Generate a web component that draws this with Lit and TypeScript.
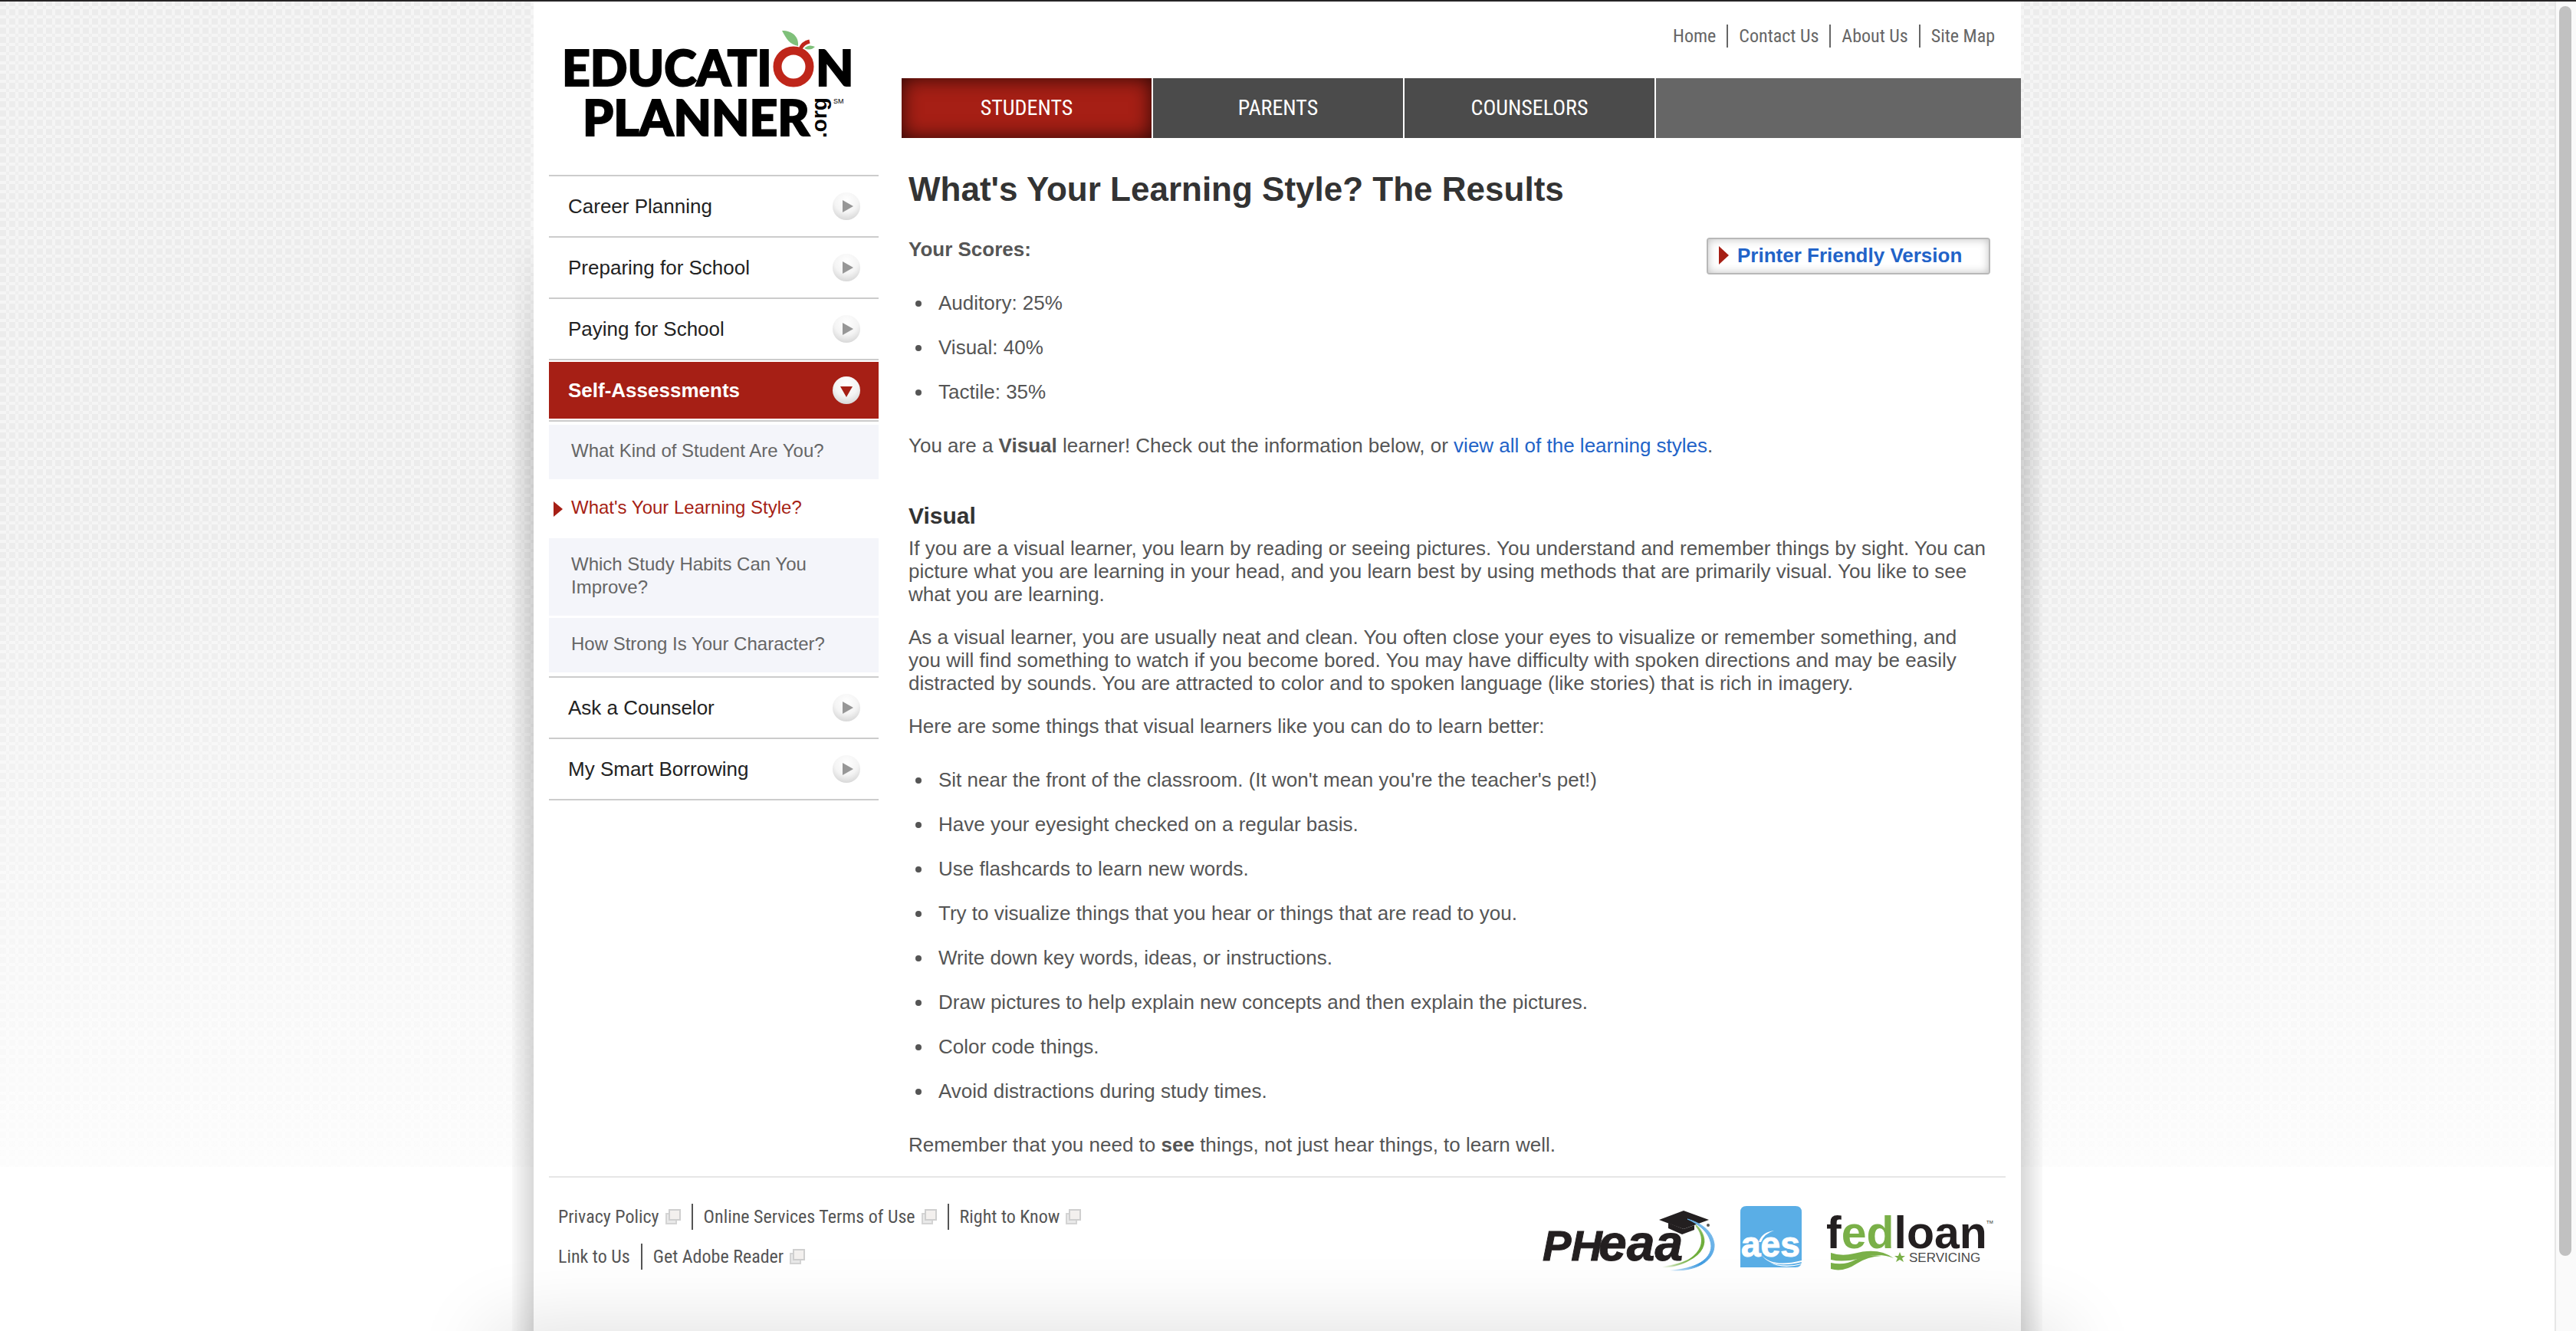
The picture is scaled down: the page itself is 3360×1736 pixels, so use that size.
import { LitElement, html, css, svg } from "lit";
import { customElement } from "lit/decorators.js";

const topLinks = ["Home", "Contact Us", "About Us", "Site Map"];
const tabs = ["Students", "Parents", "Counselors"];
const scores = ["Auditory: 25%", "Visual: 40%", "Tactile: 35%"];
const tips = [
  "Sit near the front of the classroom. (It won't mean you're the teacher's pet!)",
  "Have your eyesight checked on a regular basis.",
  "Use flashcards to learn new words.",
  "Try to visualize things that you hear or things that are read to you.",
  "Write down key words, ideas, or instructions.",
  "Draw pictures to help explain new concepts and then explain the pictures.",
  "Color code things.",
  "Avoid distractions during study times.",
];
const assessments = [
  "What Kind of Student Are You?",
  "What's Your Learning Style?",
  "Which Study Habits Can You Improve?",
  "How Strong Is Your Character?",
];
const sections: { label: string; open?: boolean; items?: string[] }[] = [
  { label: "Career Planning" },
  { label: "Preparing for School" },
  { label: "Paying for School" },
  { label: "Self-Assessments", open: true, items: assessments },
  { label: "Ask a Counselor" },
  { label: "My Smart Borrowing" },
];
const footerRows = [
  [
    { label: "Privacy Policy", ext: true },
    { label: "Online Services Terms of Use", ext: true },
    { label: "Right to Know", ext: true },
  ],
  [
    { label: "Link to Us", ext: false },
    { label: "Get Adobe Reader", ext: true },
  ],
];

const roundArrow = (open = false) => html`
  <svg class="arrow" viewBox="0 0 36 36" aria-hidden="true">
    <defs>
      <radialGradient id="ball" cx="50%" cy="30%" r="70%">
        <stop offset="0" stop-color="#fff" />
        <stop offset=".6" stop-color="#f4f4f4" />
        <stop offset="1" stop-color="#d8d8d8" />
      </radialGradient>
    </defs>
    <circle cx="18" cy="18" r="18" fill="url(#ball)" />
    ${open
      ? svg`<path d="M10 13h16l-8 14z" fill="#a61f15" />`
      : svg`<path d="M13 10l14 8-14 8z" fill="#979797" />`}
  </svg>
`;

const extIcon = html`
  <svg class="ext" viewBox="0 0 20 20" aria-hidden="true">
    <rect x="1" y="6" width="13" height="13" fill="#e9e9e9" stroke="#d4d4d4" stroke-width="2" />
    <rect x="5" y="1" width="14" height="13" fill="#f3f0ee" stroke="#cfcfcf" stroke-width="2" />
  </svg>
`;

@customElement("app-root")
export class AppRoot extends LitElement {
  static styles = css`
    :host {
      display: block;
      background: #fff;
      font-family: "Liberation Sans", Arial, sans-serif;
      font-size: 26px;
      line-height: 30px;
      color: #555;
    }
    * {
      box-sizing: border-box;
    }
    a {
      color: inherit;
      text-decoration: none;
    }
    ul {
      list-style: none;
      margin: 0;
      padding: 0;
    }
    .window {
      display: flex;
      min-height: 100vh;
      border-top: 2px solid #262425;
    }
    .canvas {
      flex: 1;
      position: relative;
      display: flex;
      justify-content: center;
      overflow: hidden;
    }
    .texture {
      position: absolute;
      inset: 0 0 auto 0;
      height: 1520px;
      background-color: #f5f5f5;
      background-image: conic-gradient(at 8px 8px, transparent 25%, #eee 0 50%, transparent 0 75%, #ececec 0);
      background-size: 12px 12px;
      background-position: 0 -2px;
    }
    .texture::after {
      content: "";
      position: absolute;
      inset: 0;
      background: linear-gradient(rgba(255, 255, 255, 0) 45%, rgba(255, 255, 255, 0.85));
    }
    .page {
      position: relative;
      display: flex;
      flex-direction: column;
      width: 1940px;
      background: #fff;
    }
    .page::before,
    .page::after {
      content: "";
      position: absolute;
      top: 300px;
      bottom: 0;
      width: 28px;
      -webkit-mask-image: linear-gradient(transparent, #000 240px);
      mask-image: linear-gradient(transparent, #000 240px);
    }
    .page::before {
      right: 100%;
      background: linear-gradient(to left, rgba(0, 0, 0, 0.15), rgba(0, 0, 0, 0.02));
    }
    .page::after {
      left: 100%;
      background: linear-gradient(to right, rgba(0, 0, 0, 0.15), rgba(0, 0, 0, 0.02));
    }
    .floor {
      position: absolute;
      left: calc(50% - 1025px);
      right: calc(50% - 1025px);
      top: 100%;
      height: 80px;
      box-shadow: 0 0 100px rgba(0, 0, 0, 0.15);
    }
    .columns {
      display: grid;
      grid-template-columns: 430px 1fr;
      column-gap: 30px;
      padding-left: 20px;
    }
    .side {
      display: flex;
      flex-direction: column;
    }
    .logo {
      display: block;
      width: 380px;
      height: 146px;
      margin: 36px 0 44px 20px;
      overflow: visible;
    }
    .menu {
      border-bottom: 2px solid #ccc;
    }
    .section {
      border-top: 2px solid #ccc;
    }
    .section-link {
      display: flex;
      align-items: center;
      justify-content: space-between;
      height: 78px;
      padding: 0 24px 0 25px;
      color: #222;
    }
    .section-link.open {
      height: 76px;
      margin-top: 2px;
      border-bottom: 2px solid #fff;
      background: #a61f15;
      color: #fff;
      font-weight: bold;
    }
    .arrow {
      width: 36px;
      height: 36px;
    }
    .submenu {
      display: flex;
      flex-direction: column;
      gap: 3px;
      padding: 4px 0 5px;
      border-top: 2px solid #ccc;
      font-size: 24px;
    }
    .sub {
      display: block;
      padding: 19px 60px 22px 29px;
      background: #f4f5fa;
      color: #666;
    }
    .sub.current {
      position: relative;
      background: none;
      color: #a61f15;
    }
    .marker {
      position: absolute;
      left: 6px;
      top: 26px;
      width: 12px;
      height: 20px;
    }
    .main {
      display: flex;
      flex-direction: column;
    }
    .top-links {
      display: flex;
      justify-content: flex-end;
      height: 100px;
      padding: 30px 34px 0 0;
      font-family: "Liberation Sans Narrow", "Arial Narrow", "Roboto Condensed", "Liberation Sans", sans-serif;
      font-size: 24px;
      color: #666;
    }
    .top-links li {
      height: 30px;
    }
    .top-links li + li {
      margin-left: 14px;
      padding-left: 14px;
      border-left: 2px solid #666;
    }
    .tabs {
      display: flex;
      gap: 2px;
      background: linear-gradient(#666, #666) right / calc(100% - 984px) 100% no-repeat;
    }
    .tab {
      width: 326px;
      height: 78px;
      background: #4b4b4b;
      color: #fff;
      font: 28px/78px "Liberation Sans Narrow", "Arial Narrow", "Roboto Condensed", "Liberation Sans", sans-serif;
      text-align: center;
      text-transform: uppercase;
    }
    .tab.active {
      background: #a61f15;
      box-shadow: inset 0 0 26px rgba(0, 0, 0, 0.75);
    }
    .content {
      padding: 40px 40px 0 9px;
    }
    h1 {
      margin: 0;
      font-size: 44px;
      line-height: 54px;
      color: #333;
    }
    .score-head {
      display: flex;
      justify-content: space-between;
      align-items: flex-start;
      height: 56px;
      margin-top: 36px;
    }
    .score-head p {
      margin: 0;
      font-weight: bold;
    }
    .printer {
      display: flex;
      align-items: center;
      gap: 11px;
      width: 370px;
      height: 48px;
      padding: 0 14px 2px;
      border: 2px solid #b8b8b8;
      border-radius: 4px;
      box-shadow: inset 0 0 12px rgba(0, 0, 0, 0.25);
      color: #2263c8;
      font-weight: bold;
    }
    .printer svg {
      width: 13px;
      height: 24px;
    }
    .bullets {
      list-style: disc;
      padding-left: 32px;
    }
    .bullets li {
      margin: 14px 0 28px;
      padding-left: 7px;
    }
    .link {
      color: #2263c8;
    }
    .verdict {
      margin: 40px 0 60px;
    }
    h2 {
      margin: 0;
      font-size: 30px;
      line-height: 34px;
      color: #333;
    }
    .prose {
      margin: 10px 0 0;
    }
    .prose + .prose {
      margin-top: 26px;
    }
    .prose + .bullets {
      margin-top: 40px;
    }
    .closing {
      margin: 40px 0 26px;
    }
    .footer {
      position: relative;
      display: flex;
      justify-content: space-between;
      margin: 0 20px;
      border-top: 2px solid #e6e6e6;
      padding: 34px 16px 60px 12px;
      font-family: "Liberation Sans Narrow", "Arial Narrow", "Roboto Condensed", "Liberation Sans", sans-serif;
      font-size: 24px;
    }
    .foot-links {
      display: flex;
      flex-direction: column;
      gap: 18px;
    }
    .foot-row {
      display: flex;
    }
    .foot-row li {
      height: 34px;
      line-height: 34px;
    }
    .foot-row a {
      display: flex;
      align-items: center;
      gap: 8px;
    }
    .foot-row li + li {
      margin-left: 14px;
      padding-left: 14px;
      border-left: 2px solid #555;
    }
    .ext {
      width: 20px;
      height: 20px;
    }
    .partners {
      display: block;
      width: 592px;
      height: 92px;
    }
    .scroll {
      position: relative;
      width: 28px;
      border-left: 2px solid #e6e6e6;
      background: #fafafa;
    }
    .thumb {
      position: absolute;
      left: 4px;
      top: 6px;
      height: 1630px;
      width: 16px;
      border-radius: 8px;
      background: #c1c1c1;
    }
  `;

  private logo() {
    return html`
      <svg class="logo" viewBox="0 0 380 146" role="img" aria-label="Education Planner">
        <g fill="#000" stroke="#000" stroke-width="2" font-family="Lato, sans-serif" font-weight="900" font-size="64">
          <text x="-3" y="74">EDUCATI</text>
          <text x="328" y="74">N</text>
          <text x="24" y="139">PLANNER</text>
        </g>
        <text transform="translate(342 142) rotate(-90)" fill="#000" font-family="Liberation Sans, sans-serif" font-weight="700" font-size="28">.org</text>
        <text x="351" y="97" fill="#000" font-family="Liberation Sans, sans-serif" font-size="9">SM</text>
        <circle cx="299" cy="49" r="21" fill="none" stroke="#bf261a" stroke-width="11" />
        <path d="M308 26q3-8 12-10" fill="none" stroke="#bf261a" stroke-width="5" />
        <path d="M284 2c14 0 22 8 21 20-11-2-15-9-21-20z" fill="#7fc07a" />
        <path d="M313 25q6-6 14-2-6 6-14 2z" fill="#7fc07a" />
      </svg>
    `;
  }

  private partners() {
    return html`
      <svg class="partners" viewBox="0 0 592 92" role="img" aria-label="PHEAA, AES and FedLoan Servicing">
        <defs>
          <linearGradient id="greenFade" x1="0" x2="1" y1="1" y2="0">
            <stop offset="0" stop-color="#6fae3c" stop-opacity="0" />
            <stop offset=".45" stop-color="#6fae3c" />
            <stop offset=".8" stop-color="#6fae3c" />
            <stop offset="1" stop-color="#6fae3c" stop-opacity=".3" />
          </linearGradient>
          <linearGradient id="blueFade" x1="0" x2="1" y1="1" y2="0">
            <stop offset="0" stop-color="#3f9be0" stop-opacity="0" />
            <stop offset=".4" stop-color="#3f9be0" />
            <stop offset="1" stop-color="#8cc4ee" />
          </linearGradient>
        </defs>
        <g fill="#231f20" stroke="#231f20" font-family="Liberation Sans, sans-serif" font-weight="700" font-style="italic">
          <text x="4" y="74" font-size="56">PH</text>
          <text x="77" y="74" font-size="66">eaa</text>
        </g>
        <path d="M156 21l32-12 33 12-33 12z" fill="#231f20" />
        <path d="M168 25l20 8 14-5v6l-16 6-18-8z" fill="#231f20" />
        <circle cx="220" cy="28" r="2" fill="#555" />
        <path d="M204 28c18 16 18 46-44 55 40-2 66-28 44-55z" fill="url(#greenFade)" stroke="url(#greenFade)" stroke-width="2" />
        <path d="M193 20c18 8 30 20 31 35 0 18-20 30-54 32 38 2 59-15 58-34-2-18-18-28-35-33z" fill="url(#blueFade)" stroke="url(#blueFade)" />
        <path d="M262 83V11q0-8 8-8h64q8 0 8 8v64q0 8-8 8z" fill="#5aaee6" />
        <text x="263" y="69" fill="#fff" stroke="#fff" font-family="Liberation Sans, sans-serif" font-weight="700" font-size="46">aes</text>
        <path d="M286 50q4-13 20-15-13 4-17 15z" fill="#fff" />
        <path d="M289 66q14 18 53 8v2q-40 10-53-10z" fill="#fff" />
        <path d="M300 76q18 8 42 2v1q-26 7-42-3z" fill="#fff" />
        <text x="374" y="58" fill="#231f20" font-family="Liberation Sans, sans-serif" font-weight="700" font-size="59">f<tspan fill="#7ab048">ed</tspan>loan</text>
        <text x="583" y="26" fill="#231f20" font-family="Liberation Sans, sans-serif" font-size="6">TM</text>
        <path d="M380 64q14 5 30 1 32-9 52 6-20-8-42 0-24 6-40 2z" fill="#7ab048" />
        <path d="M380 77q18 4 32-4 18-8 34-5-18 1-32 10-18 12-34 7z" fill="#7ab048" />
        <path d="M470 63l2 5 5 0-4 3 2 5-5-3-5 3 2-5-4-3 5 0z" fill="#7ab048" />
        <text x="482" y="76" fill="#4a4a4a" font-family="Liberation Sans, sans-serif" font-size="17">SERVICING</text>
      </svg>
    `;
  }

  render() {
    return html`
      <div class="window">
        <div class="canvas">
          <div class="texture"></div>
          <div class="page">
            <div class="columns">
              <div class="side">
                <a href="#">${this.logo()}</a>
                <nav class="menu">
                  ${sections.map(
                    (s) => html`
                      <div class="section">
                        <a class="section-link ${s.open ? "open" : ""}" href="#">${s.label}${roundArrow(s.open)}</a>
                        ${s.items
                          ? html`<div class="submenu">
                              ${s.items.map(
                                (item, i) => html`<a class="sub ${i === 1 ? "current" : ""}" href="#">${i === 1
                                    ? html`<svg class="marker" viewBox="0 0 12 20"><path d="M0 0l12 10-12 10z" fill="#a61f15" /></svg>`
                                    : ""}${item}</a>`
                              )}
                            </div>`
                          : ""}
                      </div>
                    `
                  )}
                </nav>
              </div>
              <div class="main">
                <ul class="top-links">
                  ${topLinks.map((l) => html`<li><a href="#">${l}</a></li>`)}
                </ul>
                <nav class="tabs">
                  ${tabs.map((t, i) => html`<a class="tab ${i === 0 ? "active" : ""}" href="#">${t}</a>`)}
                </nav>
                <main class="content">
                  <h1>What's Your Learning Style? The Results</h1>
                  <div class="score-head">
                    <p>Your Scores:</p>
                    <a class="printer" href="#"><svg viewBox="0 0 13 24"><path d="M0 0l13 12-13 12z" fill="#a61f15" /></svg>Printer Friendly Version</a>
                  </div>
                  <ul class="bullets">${scores.map((s) => html`<li>${s}</li>`)}</ul>
                  <p class="verdict">You are a <b>Visual</b> learner! Check out the information below, or <a class="link" href="#">view all of the learning styles</a>.</p>
                  <h2>Visual</h2>
                  <p class="prose">If you are a visual learner, you learn by reading or seeing pictures. You understand and remember things by sight. You can picture what you are learning in your head, and you learn best by using methods that are primarily visual. You like to see what you are learning.</p>
                  <p class="prose">As a visual learner, you are usually neat and clean. You often close your eyes to visualize or remember something, and you will find something to watch if you become bored. You may have difficulty with spoken directions and may be easily distracted by sounds. You are attracted to color and to spoken language (like stories) that is rich in imagery.</p>
                  <p class="prose">Here are some things that visual learners like you can do to learn better:</p>
                  <ul class="bullets">${tips.map((t) => html`<li>${t}</li>`)}</ul>
                  <p class="closing">Remember that you need to <b>see</b> things, not just hear things, to learn well.</p>
                </main>
              </div>
            </div>
            <footer class="footer">
              <div class="foot-links">
                ${footerRows.map(
                  (row) => html`<ul class="foot-row">
                    ${row.map((l) => html`<li><a href="#">${l.label}${l.ext ? extIcon : ""}</a></li>`)}
                  </ul>`
                )}
              </div>
              ${this.partners()}
            </footer>
          </div>
          <div class="floor"></div>
        </div>
        <div class="scroll"><div class="thumb"></div></div>
      </div>
    `;
  }
}
